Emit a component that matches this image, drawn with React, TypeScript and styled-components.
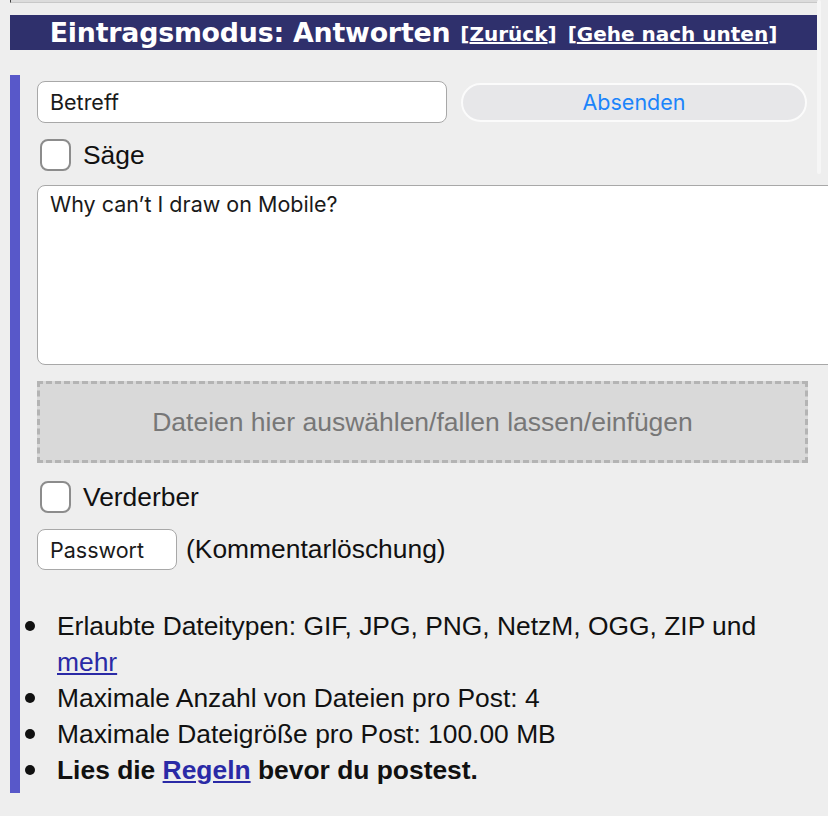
import React from "react";
import styled, { createGlobalStyle } from "styled-components";

const Global = createGlobalStyle`
  html, body { margin: 0; padding: 0; background: #eeeeee; overflow-x: hidden; }
  body { font-family: "Liberation Sans", Arial, sans-serif; color: #111; }
  * { box-sizing: border-box; }
`;

const Page = styled.div`
  position: relative;
  width: 828px;
  height: 816px;
  overflow: hidden;
  background: #eeeeee;
`;

const TopEdge = styled.div`
  margin: 0 10px 0 10px;
  height: 3px;
  background: #dcdcdc;
  border-bottom: 1px solid #c8c8c8;
  border-left: 1px solid #444;
`;

const ScrollTrack = styled.div`
  position: absolute;
  left: 817px;
  top: 0;
  width: 4px;
  height: 174px;
  border-radius: 2px;
  background: #f6f6f6;
`;

const Header = styled.div`
  margin: 12px 11px 0 10px;
  height: 35px;
  background: #2f306c;
  color: #fff;
  display: flex;
  align-items: center;
  justify-content: center;
  font-family: "DejaVu Sans", Verdana, sans-serif;
  font-weight: bold;
  white-space: nowrap;
`;

const Title = styled.span`
  font-size: 26.8px;
  letter-spacing: -0.2px;
  margin-right: 10px;
`;

const BracketLink = styled.span<{ $ml?: number }>`
  font-size: 20px;
  padding-top: 3px;
  margin-left: ${(p) => p.$ml ?? 0}px;
  a {
    color: #fff;
    text-decoration: underline;
  }
`;

const Form = styled.div`
  margin: 25px 0 0 10px;
  border-left: 10px solid #5858c9;
  padding: 6px 0 5px 17px;
  display: flex;
  flex-direction: column;
`;

const Row = styled.div<{ $mt?: number }>`
  display: flex;
  align-items: center;
  margin-top: ${(p) => p.$mt ?? 0}px;
`;

const TextInput = styled.div<{ $w: number; $h: number }>`
  width: ${(p) => p.$w}px;
  height: ${(p) => p.$h}px;
  background: #fff;
  border: 1.5px solid #a8a8a8;
  border-radius: 8px;
  padding: 0 12px;
  display: flex;
  align-items: center;
  font-family: Inter, "Noto Sans", sans-serif;
  font-size: 21.5px;
  color: #1a1a1a;
`;

const SubmitButton = styled.div`
  margin-left: 14px;
  width: 346px;
  height: 39px;
  border-radius: 20px;
  background: #e7e7e9;
  border: 2px solid #fbfbfb;
  display: flex;
  align-items: center;
  justify-content: center;
  font-family: Inter, "Noto Sans", sans-serif;
  font-size: 21.5px;
  color: #1b84fb;
`;

const Check = styled.div`
  width: 31px;
  height: 32px;
  margin-left: 3px;
  background: #fff;
  border: 2px solid #8c8c8c;
  border-radius: 8px;
`;

const Label = styled.span<{ $ml?: number }>`
  margin-left: ${(p) => p.$ml ?? 12}px;
  font-size: 26.4px;
  color: #111;
`;

const TextArea = styled.div`
  margin-top: 14px;
  width: 810px;
  height: 180px;
  background: #fff;
  border: 1.5px solid #a8a8a8;
  border-radius: 8px;
  padding: 5px 12px;
  font-family: Inter, "Noto Sans", sans-serif;
  font-size: 21.5px;
  color: #1a1a1a;
`;

const DropZone = styled.div`
  margin-top: 16px;
  width: 771px;
  height: 82px;
  background: #d9d9d9;
  border: 3px dashed #b4b4b4;
  display: flex;
  align-items: center;
  justify-content: center;
  font-size: 26.5px;
  color: #777;
`;

const Rules = styled.ul`
  margin: 38px 0 0 -17px;
  padding: 0 0 0 37px;
  list-style: none;
  font-size: 26.4px;
  line-height: 36px;
  color: #111;
  width: 780px;
`;

const Rule = styled.li<{ $bold?: boolean }>`
  font-weight: ${(p) => (p.$bold ? "bold" : "normal")};
  &::before {
    content: "";
    display: inline-block;
    width: 10px;
    height: 10px;
    border-radius: 50%;
    background: #111;
    margin-left: -32px;
    margin-right: 22px;
    vertical-align: 4px;
  }
  a {
    color: #2a2aa6;
    text-decoration: underline;
  }
`;

export default function App() {
  return (
    <Page>
      <Global />
      <TopEdge />
      <ScrollTrack />
      <Header>
        <Title>Eintragsmodus: Antworten</Title>
        <BracketLink>
          [<a href="#">Zurück</a>]
        </BracketLink>
        <BracketLink $ml={11}>
          [<a href="#">Gehe nach unten</a>]
        </BracketLink>
      </Header>
      <Form>
        <Row>
          <TextInput $w={410} $h={42}>Betreff</TextInput>
          <SubmitButton>Absenden</SubmitButton>
        </Row>
        <Row $mt={16}>
          <Check />
          <Label>Säge</Label>
        </Row>
        <TextArea>Why can’t I draw on Mobile?</TextArea>
        <DropZone>Dateien hier auswählen/fallen lassen/einfügen</DropZone>
        <Row $mt={18}>
          <Check />
          <Label>Verderber</Label>
        </Row>
        <Row $mt={16}>
          <TextInput $w={140} $h={41}>Passwort</TextInput>
          <Label $ml={9}>(Kommentarlöschung)</Label>
        </Row>
        <Rules>
          <Rule>
            Erlaubte Dateitypen: GIF, JPG, PNG, NetzM, OGG, ZIP und <a href="#">mehr</a>
          </Rule>
          <Rule>Maximale Anzahl von Dateien pro Post: 4</Rule>
          <Rule>Maximale Dateigröße pro Post: 100.00 MB</Rule>
          <Rule $bold>
            Lies die <a href="#">Regeln</a> bevor du postest.
          </Rule>
        </Rules>
      </Form>
    </Page>
  );
}
